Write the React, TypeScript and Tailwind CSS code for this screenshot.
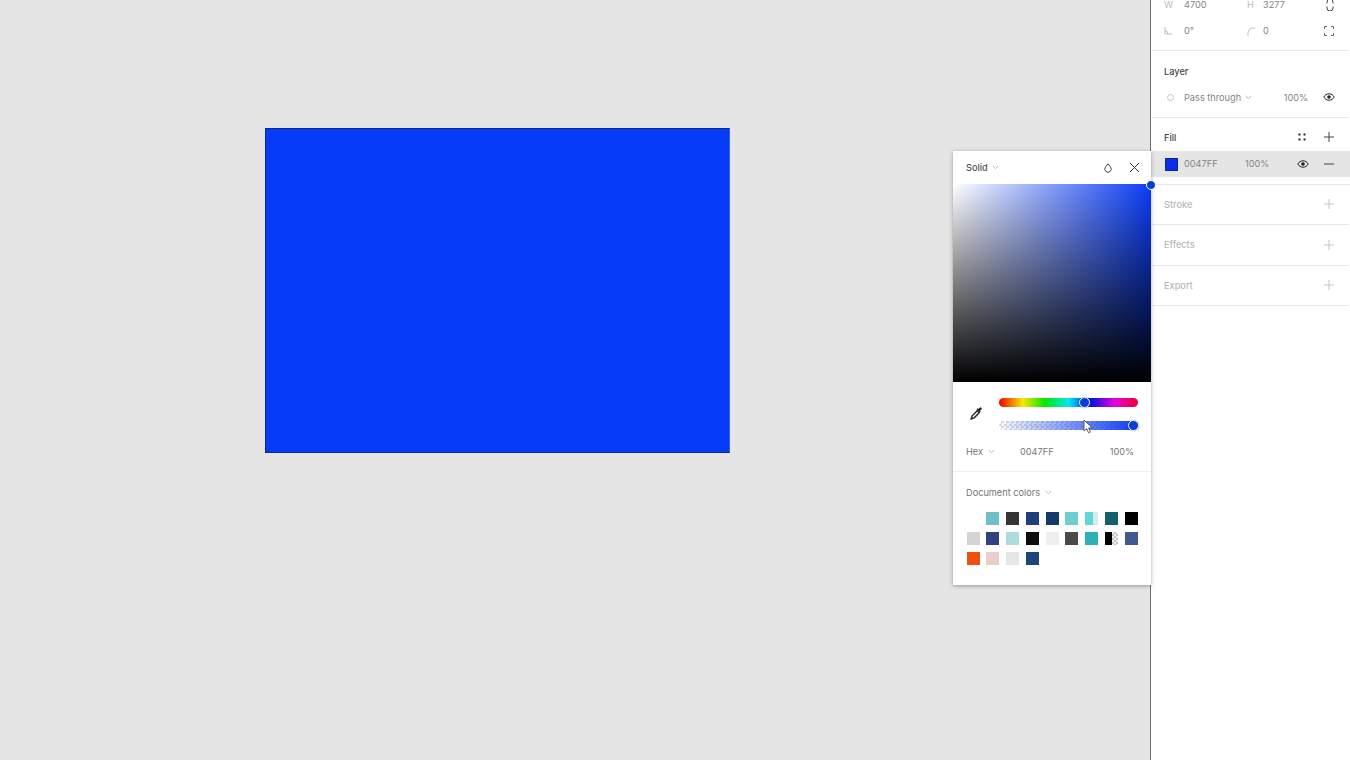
import { FC } from 'react';

const docColors = [
  ['transparent'], ['#6fbfc6'], ['#353535'], ['#1f3f7a'], ['#123a6b'], ['#70cdd0'], ['split-teal'], ['#14606a'], ['#000000'],
  ['#d4d4d4'], ['#33427f'], ['#aedbdc'], ['#0c0c0c'], ['#efefef'], ['#4a4a4a'], ['#2fb0b5'], ['split-black'], ['#41598f'],
  ['#f0500f'], ['#e8cfcc'], ['#e6e6e6'], ['#1f4479'],
];

const Plus: FC<{ muted?: boolean }> = ({ muted }) => (
  <svg width="12" height="12" viewBox="0 0 12 12" className={muted ? 'text-[#c4c4c4]' : 'text-[#444444]'}>
    <path d="M6 1v10M1 6h10" stroke="currentColor" strokeWidth="1" />
  </svg>
);

const Eye: FC = () => (
  <svg width="12" height="10" viewBox="0 0 12 10" className="text-[#222222]">
    <path d="M0.8 5C2 2.9 3.8 1.8 6 1.8S10 2.9 11.2 5C10 7.1 8.2 8.2 6 8.2S2 7.1 0.8 5Z" fill="none" stroke="currentColor" strokeWidth="1" />
    <circle cx="6" cy="5" r="1.8" fill="currentColor" />
  </svg>
);

const Chevron: FC = () => (
  <svg width="7" height="5" viewBox="0 0 7 5" className="text-[#b8b8b8]">
    <path d="M0.8 1l2.7 2.7L6.2 1" fill="none" stroke="currentColor" strokeWidth="1" />
  </svg>
);

const Section: FC<{ title: string }> = ({ title }) => (
  <div className="h-[40.5px] mx-[1px] border-b border-[#e8e8e8] flex items-center justify-between pl-[12px] pr-[14px]">
    <span className="font-medium text-[#b8b8b8]">{title}</span>
    <Plus muted />
  </div>
);

const ColorPicker: FC = () => (
  <div className="absolute left-[953px] top-[151px] w-[198px] h-[434px] bg-white shadow-[0_1px_4px_rgba(0,0,0,0.35)] text-[#777777]">
    <div className="h-[33px] flex items-center pl-[13px] pr-[11px]">
      <span className="text-[#555555] font-medium mr-[4px]">Solid</span>
      <Chevron />
      <svg width="10" height="12" viewBox="0 0 10 12" className="ml-auto mr-[16px] text-[#444444]">
        <path d="M5 1.800L7.600 5.200A3.200 3.200 0 1 1 2.400 5.200Z" fill="none" stroke="currentColor" strokeWidth="1" />
      </svg>
      <svg width="11" height="11" viewBox="0 0 11 11" className="text-[#333333]">
        <path d="M1 1l9 9M10 1l-9 9" stroke="currentColor" strokeWidth="1" />
      </svg>
    </div>
    <div className="relative h-[198px] bg-[linear-gradient(to_top,#000000,transparent),linear-gradient(to_right,#ffffff,#0a3cf5)]">
      <div className="absolute right-[-5px] top-[-4px] w-[10px] h-[10px] rounded-full bg-[#0a3cd8] border-[1.5px] border-white" />
    </div>
    <div className="h-[90px] border-b border-[#eeeeee] relative">
      <div className="flex items-center pl-[17px] pr-[13px] pt-[16px]">
        <svg width="13" height="14" viewBox="0 0 13 14" className="mr-[16px] -translate-y-[1px] text-[#222222]">
          <path d="M1.2 12.8l1-3 5-5 2 2-5 5Z" fill="#ffffff" stroke="currentColor" strokeWidth="1.4" />
          <path d="M6.500 3.200l3.300 3.300 0.900-1-0.700-0.700 1.400-1.400a1.200 1.200 0 0 0-1.700-1.700L8.300 3.100 7.500 2.300Z" fill="currentColor" />
        </svg>
        <div className="flex-1 flex flex-col gap-[14px]">
          <div className="relative h-[9px] rounded-full bg-[linear-gradient(to_right,#f00000,#f8e800_17%,#00e800_33%,#00e8f0_50%,#0a10e0_67%,#e800e0_83%,#e80030)]">
            <div className="absolute left-[80px] top-[-1px] w-[11px] h-[11px] rounded-full bg-[#0a3cd8] border-[1.5px] border-white shadow-[0_0_1px_rgba(0,0,0,0.6)]" />
          </div>
          <div className="relative h-[9px] rounded-full bg-[repeating-conic-gradient(#dddddd_0%_25%,#ffffff_0%_50%)] bg-[length:5px_5px]">
            <div className="absolute inset-0 rounded-full bg-[linear-gradient(to_right,rgba(10,60,245,0),#0a3cf5)]" />
            <div className="absolute right-[-1px] top-[-1px] w-[11px] h-[11px] rounded-full bg-[#0a3cd8] border-[1.5px] border-white shadow-[0_0_1px_rgba(0,0,0,0.6)]" />
          </div>
        </div>
      </div>
      <div className="flex items-center pl-[13px] pr-[17px] mt-[17px]">
        <span className="mr-[5px]">Hex</span>
        <Chevron />
        <span className="ml-[25px]">0047FF</span>
        <span className="ml-auto">100%</span>
      </div>
      <svg width="11" height="15" viewBox="0 0 11 15" className="absolute left-[130px] top-[37px]">
        <path d="M1 1v11l2.700-2.400 1.800 4.200 1.900-.8-1.800-4.100H9.300Z" fill="#ffffff" stroke="#444444" strokeWidth="0.8" />
      </svg>
    </div>
    <div className="pl-[13px] pt-[16px]">
      <div className="flex items-center gap-[5px] mb-[15px]">
        <span>Document colors</span>
        <Chevron />
      </div>
      <div className="grid grid-cols-[repeat(9,13px)] gap-x-[6.75px] gap-y-[7px] pl-[0.5px]">
        {docColors.map(([color], i) => {
          if (color === 'split-teal') {
            return (
              <div key={i} className="h-[13px] flex">
                <div className="w-[8px] bg-[#5fd6d8]" />
                <div className="w-[5px] bg-[#d3ecec]" />
              </div>
            );
          }
          if (color === 'split-black') {
            return (
              <div key={i} className="h-[13px] flex">
                <div className="w-[7px] bg-black" />
                <div className="w-[6px] bg-[repeating-conic-gradient(#c4c4c4_0%_25%,#eeeeee_0%_50%)] bg-[length:4px_4px]" />
              </div>
            );
          }
          return <div key={i} className="h-[13px]" style={{ backgroundColor: color }} />;
        })}
      </div>
    </div>
  </div>
);

const App: FC = () => {
  return (
    <div className="relative w-[1350px] h-[760px] overflow-hidden flex bg-[#e5e5e5] text-[9.2px] leading-none font-['Inter',sans-serif]">
      <div className="flex-1 pl-[265px] pt-[128px]">
        <div className="w-[465px] h-[325px] bg-[#063cf8] border border-[#0a2a8a] border-r-[#3a5ee0] border-b-[#0a2a8a]" />
      </div>

      <div className="w-[200px] shrink-0 bg-white border-l border-[#6b6b6b] text-[#858585]">
        <div className="h-[51px] mx-[1px] border-b border-[#e8e8e8] flex flex-col">
          <div className="flex items-center h-[26px] shrink-0 -mt-[8px] pl-[12px] pr-[15px]">
            <span className="w-[20px] text-[#bdbdbd]">W</span>
            <span className="w-[63px]">4700</span>
            <span className="w-[16px] text-[#bdbdbd]">H</span>
            <span>3277</span>
            <svg width="8" height="12" viewBox="0 0 8 12" className="ml-auto text-[#444444]">
              <path d="M1 4.500V3a3 3 0 0 1 6 0v1.500M1 7.500V9a3 3 0 0 0 6 0V7.500" fill="none" stroke="currentColor" strokeWidth="1" />
            </svg>
          </div>
          <div className="flex items-center h-[26px] shrink-0 pl-[12px] pr-[15px]">
            <svg width="20" height="8" viewBox="0 0 20 8" className="text-[#bdbdbd]">
              <path d="M1 0v7h7M1 4a3 3 0 0 1 3 3" fill="none" stroke="currentColor" strokeWidth="1" />
            </svg>
            <span className="w-[63px]">0°</span>
            <svg width="16" height="9" viewBox="0 0 16 9" className="text-[#bdbdbd]">
              <path d="M1 9V6a5 5 0 0 1 5-5h2" fill="none" stroke="currentColor" strokeWidth="1" />
            </svg>
            <span>0</span>
            <svg width="10" height="10" viewBox="0 0 10 10" className="ml-auto text-[#666666]">
              <path d="M0.500 3V0.500H3M7 0.500H9.500V3M9.500 7V9.500H7M3 9.500H0.500V7" fill="none" stroke="currentColor" strokeWidth="1" />
            </svg>
          </div>
        </div>

        <div className="h-[66.500px] mx-[1px] border-b border-[#e8e8e8] pl-[12px] pr-[14px]">
          <div className="pt-[16px] font-medium text-[#444444]">Layer</div>
          <div className="flex items-center mt-[16px]">
            <span className="w-[7px] h-[7px] ml-[3px] mr-[10px] rounded-full border border-[#c4c4c4]" />
            <span className="mr-[4px]">Pass through</span>
            <Chevron />
            <span className="ml-auto mr-[15px]">100%</span>
            <Eye />
          </div>
        </div>

        <div className="h-[67px] mx-[-1px] border-b border-[#e8e8e8]">
          <div className="h-[33.500px] flex items-center pl-[14px] pr-[16px] pt-[6px]">
            <span className="font-medium text-[#444444]">Fill</span>
            <svg width="8" height="8" viewBox="0 0 8 8" className="ml-auto mr-[17px] text-[#222222]">
              <path d="M0.500 0.500h2v2h-2zM5.500 0.500h2v2h-2zM0.500 5.500h2v2h-2zM5.500 5.500h2v2h-2z" fill="currentColor" />
            </svg>
            <Plus />
          </div>
          <div className="h-[26px] bg-[#e5e5e5] flex items-center pl-[15px] pr-[16px]">
            <div className="w-[13px] h-[13px] bg-[#0a2cf0] border border-[#0a2a8a]" />
            <span className="ml-[6px] w-[61px]">0047FF</span>
            <span>100%</span>
            <span className="ml-auto mr-[14px]"><Eye /></span>
            <svg width="12" height="12" viewBox="0 0 12 12" className="text-[#444444]">
              <path d="M1 6h10" stroke="currentColor" strokeWidth="1" />
            </svg>
          </div>
        </div>

        <Section title="Stroke" />
        <Section title="Effects" />
        <Section title="Export" />
      </div>

      <ColorPicker />
    </div>
  );
};

export default App;
